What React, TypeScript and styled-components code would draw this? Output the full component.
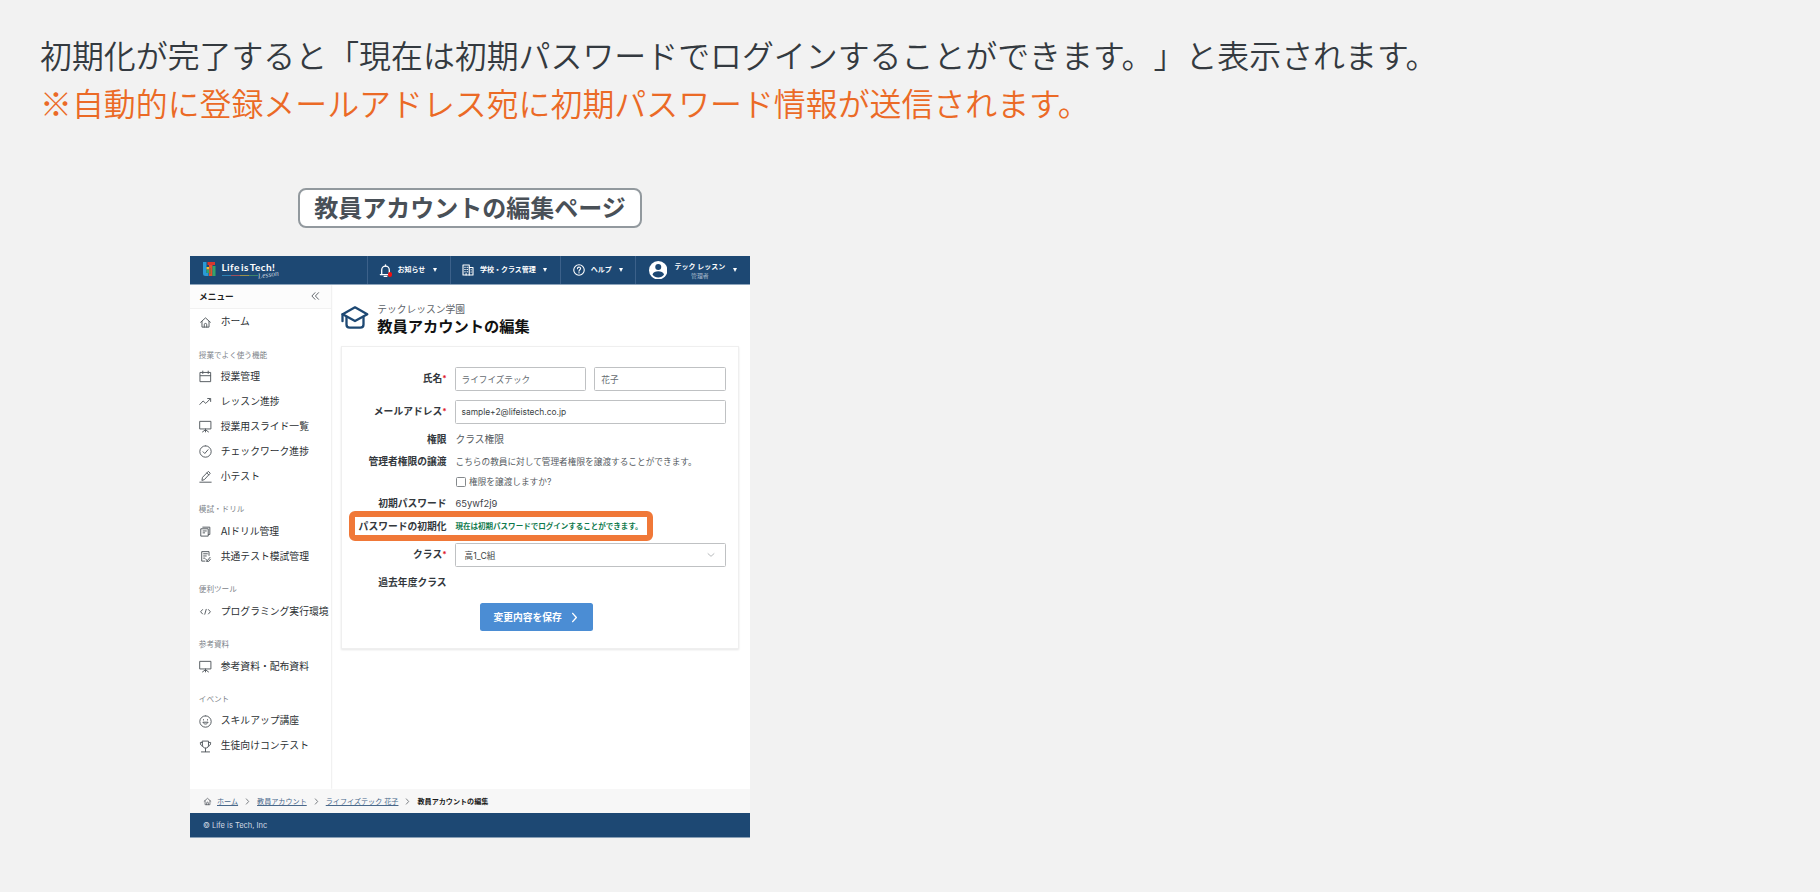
import React from "react";
import styled, { createGlobalStyle } from "styled-components";

const Global = createGlobalStyle`
  *, *::before, *::after { box-sizing: border-box; }
  html, body { margin: 0; background: #f2f2f2; }
  body {
    font-family: Inter, "Noto Sans CJK JP", sans-serif;
    color: #333a40;
    text-spacing-trim: space-all;
  }
`;

const Page = styled.main`
  width: 1820px;
  height: 892px;
  overflow: hidden;
  background: #f2f2f2;
`;

const Lead = styled.div`
  padding: 30px 0 0 40px;
  font-family: "Noto Sans CJK JP", sans-serif;
  font-size: 31.92px;
  font-weight: 350;
  line-height: 48px;
  white-space: nowrap;
`;

const LeadLine = styled.p<{ $accent?: boolean }>`
  margin: 0;
  color: ${(p) => (p.$accent ? "#eb6a26" : "#343a40")};
`;

const Figure = styled.section`
  width: 560px;
  margin: 62px 0 0 190px;
  display: flex;
  flex-direction: column;
  align-items: center;
`;

const Tag = styled.h2`
  margin: 0 0 28px;
  width: 344px;
  height: 40px;
  border: 2px solid #92999e;
  border-radius: 8px;
  background: #fff;
  color: #495057;
  font-size: 24px;
  font-weight: 700;
  line-height: 38px;
  text-align: center;
  white-space: nowrap;
`;

const Screen = styled.div`
  width: 560px;
  height: 581.5px;
  background: #fff;
  display: flex;
  flex-direction: column;
`;

const TopBar = styled.header`
  height: 29px;
  flex: none;
  display: flex;
  background: #1d4873;
  border-bottom: 1px solid #8ea5bc;
  color: #fff;
`;

const Brand = styled.div`
  width: 177px;
  padding: 5.5px 0 0 13px;
  display: flex;
  gap: 5.5px;
`;

const BrandName = styled.div`
  margin-top: -1px;
  font-family: Lato, sans-serif;
  font-size: 10px;
  font-weight: 700;
  line-height: 12px;
  letter-spacing: 0.42px;
  word-spacing: -1.6px;
  white-space: nowrap;
`;

const BrandSub = styled.div`
  display: flex;
  align-items: center;
  height: 6px;
`;

const Dash = styled.i<{ $color: string }>`
  flex: none;
  width: 9.2px;
  height: 1px;
  background: ${(p) => p.$color};
`;

const Script = styled.span`
  flex: none;
  font-family: "Liberation Serif", serif;
  font-style: italic;
  font-size: 7.6px;
  line-height: 6px;
  color: #c4d0dc;
  transform: rotate(-8deg) translateY(-1px);
`;

const NavItem = styled.div<{ $width: number; $pad: number }>`
  width: ${(p) => p.$width}px;
  padding-left: ${(p) => p.$pad}px;
  display: flex;
  align-items: center;
  border-left: 1px solid #3c618a;
  font-size: 7px;
  font-weight: 600;
  line-height: 10px;
  white-space: nowrap;
`;

const NavText = styled.span<{ $left: number }>`
  margin-left: ${(p) => p.$left}px;
`;

const Caret = styled.i<{ $left?: number }>`
  margin-left: ${(p) => p.$left ?? 7.5}px;
  border: 2.4px solid transparent;
  border-top: 4px solid #fff;
  border-bottom: 0;
`;

const User = styled.div`
  margin-left: 7.5px;
  text-align: center;
`;

const Role = styled.div`
  font-size: 5.9px;
  line-height: 7px;
  font-weight: 400;
  color: #a9bbcd;
`;

const Body = styled.div`
  flex: 1;
  min-height: 0;
  display: flex;
`;

const Sidebar = styled.nav`
  width: 140.5px;
  flex: none;
  box-shadow: 0 0 2px rgba(0, 0, 0, 0.18);
  clip-path: inset(0 -4px 0 0);
  white-space: nowrap;
`;

const MenuHead = styled.div`
  height: 24px;
  margin-bottom: 0.5px;
  padding: 0 11px 1px 9px;
  display: flex;
  align-items: center;
  justify-content: space-between;
  background: #fcfcfc;
  border-bottom: 1px solid #f1f1f1;
  font-size: 8.7px;
  font-weight: 700;
  color: #222;
`;

const MenuItem = styled.a`
  height: 25.03px;
  padding-left: 8.6px;
  display: flex;
  align-items: center;
  gap: 9.2px;
  font-size: 9.8px;
  line-height: 14px;
  color: #2b2f33;
`;

const MenuLabel = styled.div`
  height: 29.85px;
  padding: 16px 0 0 8.8px;
  font-size: 7.6px;
  line-height: 10px;
  color: #7d8389;
`;

const Main = styled.div`
  flex: 1;
  padding: 17.5px 10px 0 10px;
`;

const Heading = styled.div`
  height: 43px;
  display: flex;
  gap: 8px;
  padding: 2px 0 0 0.8px;
`;

const School = styled.div`
  margin-top: -1px;
  font-size: 9.75px;
  line-height: 12px;
  color: #5d6369;
`;

const Title = styled.h1`
  margin: 1px 0 0;
  font-size: 15.25px;
  line-height: 19px;
  color: #111;
`;

const Card = styled.div`
  width: 398.5px;
  height: 303px;
  border: 1px solid #efefef;
  box-shadow: 0 1px 2px rgba(0, 0, 0, 0.1);
`;

const Row = styled.div<{ $top: number; $height: number }>`
  position: relative;
  height: ${(p) => p.$height}px;
  margin-top: ${(p) => p.$top}px;
  display: grid;
  grid-template-columns: 105px 271px;
  column-gap: 8px;
  align-items: center;
  white-space: nowrap;
`;

const Label = styled.label`
  text-align: right;
  font-size: 9.78px;
  font-weight: 700;
  line-height: 14px;
  color: #33383d;
`;

const Star = styled.sup`
  display: inline-block;
  width: 4.3px;
  font-size: 8px;
  line-height: 0;
  vertical-align: 1px;
  color: #e01b2e;
`;

const Value = styled.div<{ $size?: number; $strong?: boolean; $dark?: boolean }>`
  padding-left: 1px;
  display: flex;
  align-items: center;
  font-size: ${(p) => p.$size ?? 9.78}px;
  font-weight: ${(p) => (p.$strong ? 700 : 400)};
  line-height: 12px;
  color: ${(p) => (p.$strong ? "#0f7a4d" : p.$dark ? "#3f4449" : "#555b61")};
`;

const Fields = styled.div`
  display: flex;
  gap: 8.5px;
`;

const Field = styled.div<{ $dark?: boolean; $pad?: number; $size?: number }>`
  flex: 1;
  height: 24px;
  padding: 0 10px 0 ${(p) => p.$pad ?? 6}px;
  display: flex;
  align-items: center;
  justify-content: space-between;
  border: 1px solid #bfc1c3;
  border-radius: 1.5px;
  background: #fff;
  font-size: ${(p) => p.$size ?? 8.63}px;
  color: ${(p) => (p.$dark ? "#3a3f44" : "#666c71")};
`;

const Check = styled.span`
  width: 10px;
  height: 10px;
  margin-right: 3.5px;
  border: 1px solid #85898c;
  border-radius: 1.5px;
`;

const Highlight = styled.div`
  position: absolute;
  left: 7.5px;
  top: -7px;
  width: 304px;
  height: 30px;
  border: 6px solid #f07838;
  border-radius: 6px;
`;

const Save = styled.button`
  display: flex;
  align-items: center;
  gap: 7.5px;
  width: 113px;
  height: 28px;
  margin: 12px 0 0 138.5px;
  padding: 0 0 0 13.5px;
  border: 0;
  border-radius: 2.5px;
  background: #4b8dd4;
  color: #fff;
  font-family: inherit;
  font-size: 9.78px;
  font-weight: 700;
  white-space: nowrap;
`;

const Crumbs = styled.div`
  height: 24px;
  flex: none;
  padding-left: 13px;
  display: flex;
  align-items: center;
  background: #f7f7f7;
  font-size: 7.1px;
  white-space: nowrap;
`;

const Crumb = styled.a`
  color: #48688b;
  text-decoration: underline;
  text-underline-offset: 1.3px;
  text-decoration-thickness: 0.7px;
`;

const Current = styled.b`
  color: #1b1b1b;
`;

const Foot = styled.footer`
  height: 24.5px;
  flex: none;
  padding-left: 13px;
  background: #1d4873;
  border-bottom: 1px solid #8aa0b6;
  color: #d4dde6;
  font-size: 7.5px;
  line-height: 25.5px;
`;

type IconProps = { d: string[]; size?: number; w?: number; color?: string };

const IconSvg = styled.svg`
  flex: none;
`;

const Icon = ({ d, size = 13, w = 1.8, color = "#555b61" }: IconProps) => (
  <IconSvg
    width={size}
    height={size}
    viewBox="0 0 24 24"
    fill="none"
    stroke={color}
    strokeWidth={w}
    strokeLinecap="round"
    strokeLinejoin="round"
  >
    {d.map((p) => (
      <path key={p} d={p} />
    ))}
  </IconSvg>
);

const icons = {
  home: ["M3 11.500 12 3.500 21 11.500", "M5.500 10v10.500h13V10", "M9.700 20.500v-4.500a2.300 2.300 0 0 1 4.600 0v4.500"],
  calendar: ["M2.500 4.500h19v17h-19z", "M2.500 10.500h19", "M7 2v4.500M17 2v4.500"],
  trend: ["M1.500 17.500l6-6.500 5 4.500L20.500 7.500", "M16 6.500h5.500v5.500"],
  easel: ["M2 2.500h20v14H2z", "M12 16.500v5.500", "M6.500 22l5.500-4 5.500 4"],
  check: ["M12 1.500a10.500 10.500 0 1 0 0 21a10.500 10.500 0 1 0 0-21", "M7.500 12.500l3.200 3.200 6-7"],
  pen: ["M1.500 22.500h21", "M5.500 18.500l1-5L17.300 2.500l3.500 3.500L10.300 17.300z", "M14.500 5.500l3.500 3.500"],
  drill: ["M7 4h13v13.500H17.500", "M4 7h13v13.500H4z", "M7.500 11h6M7.500 14.500h3"],
  exam: ["M18.500 10V3H5v17.500h6", "M8.500 7h7M8.500 11h5M8.500 15h2", "M12.500 16.500l2.500 3.500 5.500-6.500", "M14 21h4l3-4"],
  code: ["M6.500 8.500L3 12.500l3.500 4", "M17.500 8.500l3.500 4-3.500 4", "M13.300 8l-2.600 9"],
  smile: ["M12 1.500a10.500 10.500 0 1 0 0 21a10.500 10.500 0 1 0 0-21", "M7.500 14c1.500 3.800 7.500 3.800 9 0z", "M8.300 8.500v.800M15.700 8.500v.800"],
  trophy: ["M6.500 2h11v8.500c0 6-11 6-11 0z", "M6.500 4.500h-4c0 4 1 6.500 4.500 7M17.500 4.500h4c0 4-1 6.500-4.500 7", "M12 15v6.500M4.500 22h15"],
  collapse: ["M12 4l-7.500 8 7.500 8", "M20.500 4L13 12l7.500 8"],
  next: ["M8 3l8 9-8 9"],
  down: ["M3 8l9 8 9-8"],
  bell: ["M2.500 19.500h19M5 19.500V11a7 7 0 0 1 14 0V19.500", "M12 3.500V1.500", "M9.500 22.800h5"],
  building: ["M2 2h12.500v20H2z", "M14.500 7H22v15h-7.500", "M5.500 6.500h1M10 6.500h1M5.500 11h1M10 11h1M5.500 15.500h1M10 15.500h1M18 11.500h.800M18 16h.800M8.200 22v-3"],
  help: ["M12 1.500a10.500 10.500 0 1 0 0 21a10.500 10.500 0 1 0 0-21", "M8.800 9.500c0-4.500 6.400-4.200 6.400-.500 0 2.500-3.200 2.500-3.200 5.500", "M12 17.300v.500"],
};

const Bell = styled.span`
  position: relative;
  display: flex;
  &::after {
    content: "";
    position: absolute;
    right: 0;
    bottom: 0;
    width: 4.5px;
    height: 4.5px;
    border-radius: 50%;
    background: #f50f0f;
  }
`;

const LogoMark = () => (
  <svg width="13" height="15" viewBox="0 0 26 30">
    <path fill="#2a9ad6" d="M0 0h7v22h4v6H5q-5 0-5-5z" />
    <path fill="#d8372e" d="M9 0h15v6H9z" />
    <path fill="#e2512f" d="M12 6h7v22h-7z" />
    <path fill="#f2c12e" d="M7 10h5v5H7z" />
    <path fill="#35a36b" d="M7 16h5v6H7zM19 8h6v20h-6z" />
    <path fill="#8a6b39" d="M13 12h2.500v12H13z" />
  </svg>
);

const Avatar = () => (
  <svg width="18.500" height="18.500" viewBox="0 0 24 24">
    <circle cx="12" cy="12" r="12" fill="#fff" />
    <circle cx="12" cy="7.800" r="3.900" fill="#1d4873" />
    <path d="M4.500 17.500c1.500-5.500 13.500-5.500 15 0-3 5-12 5-15 0z" fill="#1d4873" />
  </svg>
);

const Cap = () => (
  <svg width="28" height="25" viewBox="0 0 28 25" fill="none" stroke="#1d4873" strokeWidth="2.300" strokeLinejoin="round" strokeLinecap="round">
    <path d="M14 2.300L26.300 9.200 14 16 1.700 9.200z" />
    <path d="M1.500 9.200v7" />
    <path d="M5.500 12v7.500c0 2 1.200 3.200 3.200 3.200h10.600c2 0 3.200-1.200 3.200-3.200V12" />
  </svg>
);

const menu: { label?: string; items: [keyof typeof icons, string][] }[] = [
  { items: [["home", "ホーム"]] },
  {
    label: "授業でよく使う機能",
    items: [
      ["calendar", "授業管理"],
      ["trend", "レッスン進捗"],
      ["easel", "授業用スライド一覧"],
      ["check", "チェックワーク進捗"],
      ["pen", "小テスト"],
    ],
  },
  { label: "模試・ドリル", items: [["drill", "AIドリル管理"], ["exam", "共通テスト模試管理"]] },
  { label: "便利ツール", items: [["code", "プログラミング実行環境"]] },
  { label: "参考資料", items: [["easel", "参考資料・配布資料"]] },
  { label: "イベント", items: [["smile", "スキルアップ講座"], ["trophy", "生徒向けコンテスト"]] },
];

const Sep = styled.span`
  display: flex;
  width: 19px;
  justify-content: center;
`;

const Separator = () => (
  <Sep>
    <Icon d={icons.next} size={7} w={2.6} />
  </Sep>
);

const HomeCrumb = styled.span`
  display: flex;
  margin-right: 5px;
`;

export default function App() {
  return (
    <Page>
      <Global />
      <Lead>
        <LeadLine>初期化が完了すると「現在は初期パスワードでログインすることができます。」と表示されます。</LeadLine>
        <LeadLine $accent>※自動的に登録メールアドレス宛に初期パスワード情報が送信されます。</LeadLine>
      </Lead>
      <Figure>
        <Tag>教員アカウントの編集ページ</Tag>
        <Screen>
          <TopBar>
            <Brand>
              <LogoMark />
              <div>
                <BrandName>Life is Tech!</BrandName>
                <BrandSub>
                  <Dash $color="#2f83b5" />
                  <Dash $color="#a1505c" />
                  <Dash $color="#9b914d" />
                  <Dash $color="#3f856c" />
                  <Script>Lesson</Script>
                </BrandSub>
              </div>
            </Brand>
            <NavItem $width={83} $pad={11}>
              <Bell>
                <Icon d={icons.bell} color="#fff" size={13} w={2.4} />
              </Bell>
              <NavText $left={5.5}>お知らせ</NavText>
              <Caret />
            </NavItem>
            <NavItem $width={110} $pad={10.5}>
              <Icon d={icons.building} color="#fff" size={12} w={2.2} />
              <NavText $left={6.5}>学校・クラス管理</NavText>
              <Caret />
            </NavItem>
            <NavItem $width={75} $pad={11.5}>
              <Icon d={icons.help} color="#fff" size={12} w={2.2} />
              <NavText $left={6.3}>ヘルプ</NavText>
              <Caret $left={7} />
            </NavItem>
            <NavItem $width={115} $pad={12.5}>
              <Avatar />
              <User>
                <div>テック レッスン</div>
                <Role>管理者</Role>
              </User>
              <Caret />
            </NavItem>
          </TopBar>
          <Body>
            <Sidebar>
              <MenuHead>
                メニュー
                <Icon d={icons.collapse} size={10} w={2.2} />
              </MenuHead>
              {menu.map((group) => (
                <React.Fragment key={group.items[0][1]}>
                  {group.label && <MenuLabel>{group.label}</MenuLabel>}
                  {group.items.map(([icon, text]) => (
                    <MenuItem key={text}>
                      <Icon d={icons[icon]} />
                      {text}
                    </MenuItem>
                  ))}
                </React.Fragment>
              ))}
            </Sidebar>
            <Main>
              <Heading>
                <Cap />
                <div>
                  <School>テックレッスン学園</School>
                  <Title>教員アカウントの編集</Title>
                </div>
              </Heading>
              <Card>
                <Row $top={20.5} $height={24}>
                  <Label>氏名<Star>*</Star></Label>
                  <Fields>
                    <Field>ライフイズテック</Field>
                    <Field>花子</Field>
                  </Fields>
                </Row>
                <Row $top={9} $height={24}>
                  <Label>メールアドレス<Star>*</Star></Label>
                  <Field $dark $size={8.42}>sample+2@lifeistech.co.jp</Field>
                </Row>
                <Row $top={5.5} $height={20}>
                  <Label>権限</Label>
                  <Value>クラス権限</Value>
                </Row>
                <Row $top={2.5} $height={20}>
                  <Label>管理者権限の譲渡</Label>
                  <Value $size={8.66}>こちらの教員に対して管理者権限を譲渡することができます。</Value>
                </Row>
                <Row $top={4} $height={12}>
                  <span />
                  <Value $size={8.66}>
                    <Check />
                    権限を譲渡しますか?
                  </Value>
                </Row>
                <Row $top={8} $height={16}>
                  <Label>初期パスワード</Label>
                  <Value $dark $size={9.4}>65ywf2j9</Value>
                </Row>
                <Row $top={6} $height={18}>
                  <Label>パスワードの初期化</Label>
                  <Value $size={7.53} $strong>現在は初期パスワードでログインすることができます。</Value>
                  <Highlight />
                </Row>
                <Row $top={7} $height={24}>
                  <Label>クラス<Star>*</Star></Label>
                  <Field $dark $pad={9}>
                    高1_C組
                    <Icon d={icons.down} size={8} w={2.4} color="#a5a8ab" />
                  </Field>
                </Row>
                <Row $top={8} $height={16}>
                  <Label>過去年度クラス</Label>
                </Row>
                <Save type="button">
                  変更内容を保存
                  <Icon d={icons.next} size={11} w={3} color="#fff" />
                </Save>
              </Card>
            </Main>
          </Body>
          <Crumbs>
            <HomeCrumb>
              <Icon d={icons.home} size={9} w={2} />
            </HomeCrumb>
            <Crumb>ホーム</Crumb>
            <Separator />
            <Crumb>教員アカウント</Crumb>
            <Separator />
            <Crumb>ライフイズテック 花子</Crumb>
            <Separator />
            <Current>教員アカウントの編集</Current>
          </Crumbs>
          <Foot>© Life is Tech, Inc</Foot>
        </Screen>
      </Figure>
    </Page>
  );
}
